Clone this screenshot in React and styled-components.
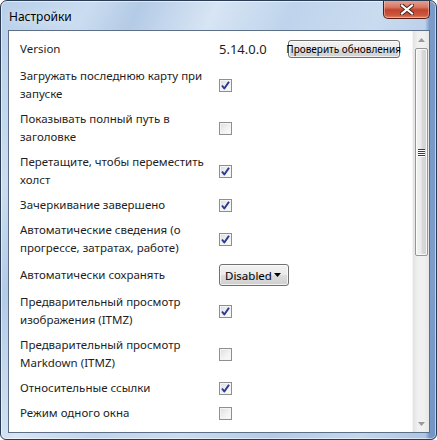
import React from "react";
import styled, { createGlobalStyle } from "styled-components";

const GlobalStyle = createGlobalStyle`
  html, body {
    margin: 0;
    padding: 0;
    background: #ffffff;
  }
  * {
    box-sizing: border-box;
  }
`;

const Window = styled.div`
  width: 437px;
  height: 440px;
  display: flex;
  flex-direction: column;
  border: 1px solid #2b3c55;
  border-radius: 7px 7px 6px 6px;
  padding: 0 6px 6px 7px;
  background:
    linear-gradient(90deg, rgba(255,255,255,0) 0%, rgba(255,255,255,0) 97.5%, rgba(70,110,175,0.55) 98.5%, rgba(70,110,175,0.55) 100%),
    linear-gradient(115deg, #b7cfe9 0%, #cadcf0 14%, #b4cbe6 22%, #d7e5f4 34%, #bfd4ec 46%, #c9dbef 60%, #b3cbe7 74%, #c2d6ed 88%, #a9c3e3 100%);
  box-shadow: inset 0 0 0 1px rgba(255, 255, 255, 0.55);
  font-family: "Segoe UI", "Noto Sans", "Open Sans", sans-serif;
  color: #1e1e1e;
  overflow: hidden;
`;

const TitleBar = styled.div`
  height: 29px;
  flex: none;
  display: flex;
  align-items: flex-start;
  justify-content: space-between;
`;

const Title = styled.div`
  padding: 7px 0 0 1px;
  font-size: 12px;
  color: #000;
  text-shadow: 0 0 8px rgba(255, 255, 255, 0.9);
`;

const CloseButton = styled.div`
  width: 47px;
  height: 19px;
  margin-top: -1px;
  display: flex;
  align-items: center;
  justify-content: center;
  border: 1px solid #5a1a10;
  border-top: none;
  border-radius: 0 0 5px 5px;
  background: linear-gradient(180deg, #e9a797 0%, #d77763 40%, #c4432c 55%, #c95a3f 85%, #e08a6c 100%);
  box-shadow: inset 0 0 0 1px rgba(255, 220, 210, 0.45);
`;

const Client = styled.div`
  flex: 1;
  display: flex;
  border: 1px solid #5d6f87;
  background: #ffffff;
  min-height: 0;
`;

const Content = styled.div`
  flex: 1;
  padding: 7px 0 0 11px;
  display: flex;
  flex-direction: column;
  gap: 7px;
  overflow: hidden;
`;

const Row = styled.div`
  display: grid;
  grid-template-columns: 199px auto;
  align-items: center;
  min-height: ${(p) => p.$h || 18}px;
`;

const Label = styled.div`
  font-size: 11.5px;
  line-height: 18px;
  white-space: nowrap;
  color: #1e1e1e;
`;

const VersionCell = styled.div`
  display: flex;
  align-items: center;
  gap: 21px;
`;

const VersionText = styled.span`
  font-size: 13px;
  color: #1e1e1e;
`;

const PushButton = styled.div`
  width: 112px;
  height: 18px;
  display: flex;
  align-items: center;
  justify-content: center;
  white-space: nowrap;
  font-size: 10px;
  color: #000;
  border: 1px solid #707070;
  border-radius: 3px;
  background: linear-gradient(180deg, #f2f2f2 0%, #ebebeb 48%, #dddddd 52%, #cfcfcf 100%);
  box-shadow: inset 0 0 0 1px rgba(255, 255, 255, 0.7);
`;

const Dropdown = styled.div`
  width: 70px;
  height: 22px;
  display: flex;
  align-items: center;
  justify-content: space-between;
  padding: 0 7px 0 5px;
  font-size: 11.5px;
  color: #000;
  border: 1px solid #707070;
  border-radius: 3px;
  background: linear-gradient(180deg, #f2f2f2 0%, #ebebeb 48%, #dddddd 52%, #cfcfcf 100%);
  box-shadow: inset 0 0 0 1px rgba(255, 255, 255, 0.7);
`;

const Box = styled.div`
  width: 13px;
  height: 13px;
  border: 1px solid #8e8f8f;
  background: linear-gradient(135deg, #dcdcdc 0%, #f0f0f0 50%, #fdfdfd 100%);
  box-shadow: inset 0 0 0 1px #f4f4f4;
  display: flex;
  align-items: center;
  justify-content: center;
`;

const ScrollBar = styled.div`
  width: 17px;
  flex: none;
  display: flex;
  flex-direction: column;
  align-items: center;
  background: linear-gradient(90deg, #e3e3e3 0%, #f0f0f0 30%, #f0f0f0 70%, #e6e6e6 100%);
  border-left: 1px solid #f4f4f4;
`;

const Arrow = styled.div`
  height: 17px;
  display: flex;
  align-items: center;
  justify-content: center;
  flex: none;
`;

const Track = styled.div`
  flex: 1;
  display: flex;
  flex-direction: column;
  align-items: center;
`;

const Thumb = styled.div`
  width: 13px;
  height: 208px;
  border: 1px solid #969696;
  border-radius: 2px;
  background: linear-gradient(90deg, #f2f2f2 0%, #ebebeb 45%, #d9d9d9 55%, #d2d2d2 100%);
  box-shadow: inset 0 0 0 1px rgba(255, 255, 255, 0.8);
  display: flex;
  flex-direction: column;
  align-items: center;
  justify-content: center;
  gap: 1px;
`;

const Grip = styled.div`
  width: 7px;
  height: 1px;
  background: #3c3c3c;
  box-shadow: 0 1px 0 #ffffff;
`;

const Check = ({ on }) => (
  <Box>
    {on && (
      <svg width="9" height="9" viewBox="0 0 9 9">
        <path d="M1 4.5 L3.3 7.5 L8 0.8" fill="none" stroke="#2b3b8f" strokeWidth="2" strokeLinejoin="round" />
      </svg>
    )}
  </Box>
);

const Tri = ({ down, color = "#9a9a9a" }) => (
  <svg width="7" height="4" viewBox="0 0 7 4">
    <path d={down ? "M0 0 L3.5 4 L7 0 Z" : "M0 4 L3.5 0 L7 4 Z"} fill={color} />
  </svg>
);

const settings = [
  { lines: ["Загружать последнюю карту при", "запуске"], on: true },
  { lines: ["Показывать полный путь в", "заголовке"], on: false },
  { lines: ["Перетащите, чтобы переместить", "холст"], on: true },
  { lines: ["Зачеркивание завершено"], on: true },
  { lines: ["Автоматические сведения (о", "прогрессе, затратах, работе)"], on: true },
  { lines: ["Автоматически сохранять"], select: "Disabled" },
  { lines: ["Предварительный просмотр", "изображения (ITMZ)"], on: true },
  { lines: ["Предварительный просмотр", "Markdown (ITMZ)"], on: false },
  { lines: ["Относительные ссылки"], on: true },
  { lines: ["Режим одного окна"], on: false },
];

export default function App() {
  return (
    <>
      <GlobalStyle />
      <Window>
        <TitleBar>
          <Title>Настройки</Title>
          <CloseButton>
            <svg width="14" height="11" viewBox="0 0 14 11">
              <path d="M2 1.5 L12 9.5 M12 1.5 L2 9.5" stroke="#4a1d16" strokeWidth="4" strokeLinecap="square" />
              <path d="M2 1.5 L12 9.5 M12 1.5 L2 9.5" stroke="#ffffff" strokeWidth="2.2" strokeLinecap="square" />
            </svg>
          </CloseButton>
        </TitleBar>
        <Client>
          <Content>
            <Row $h={22}>
              <Label>Version</Label>
              <VersionCell>
                <VersionText>5.14.0.0</VersionText>
                <PushButton>Проверить обновления</PushButton>
              </VersionCell>
            </Row>
            {settings.map((s, i) => (
              <Row key={i} $h={s.select ? 22 : 18}>
                <Label>
                  {s.lines.map((l, j) => (
                    <div key={j}>{l}</div>
                  ))}
                </Label>
                {s.select ? (
                  <Dropdown>
                    <span>{s.select}</span>
                    <Tri down color="#000" />
                  </Dropdown>
                ) : (
                  <Check on={s.on} />
                )}
              </Row>
            ))}
          </Content>
          <ScrollBar>
            <Arrow>
              <Tri />
            </Arrow>
            <Track>
              <Thumb>
                <Grip />
                <Grip />
                <Grip />
                <Grip />
              </Thumb>
            </Track>
            <Arrow>
              <Tri down />
            </Arrow>
          </ScrollBar>
        </Client>
      </Window>
    </>
  );
}
